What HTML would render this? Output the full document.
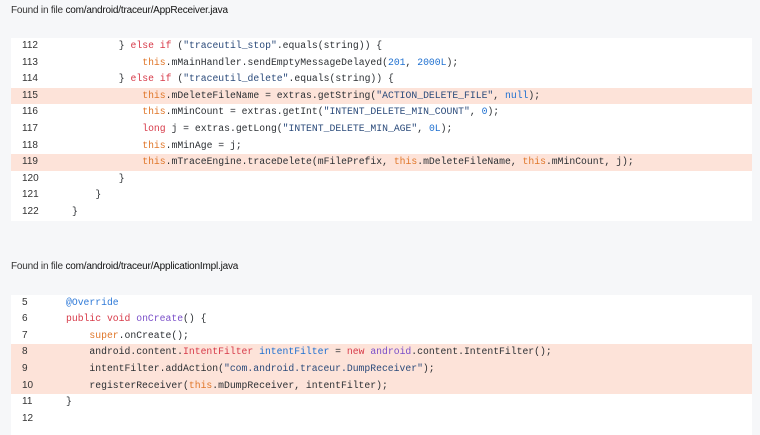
<!DOCTYPE html>
<html><head><meta charset="utf-8"><style>
body{margin:0;width:760px;height:433px;overflow:hidden;background:#f6f7f9;font-family:"Liberation Sans",sans-serif;}
.h{position:absolute;left:11px;font-size:10px;color:#333;letter-spacing:-0.2px}
.h b{font-weight:normal;color:#111;}
.blk{position:absolute;left:11px;width:741px;background:#fff;}
.r{height:16.6px;line-height:16.6px;position:relative;white-space:pre;}
.r.hl{background:#fde3d9;}
.n{position:absolute;left:11px;font-size:10px;color:#333;}
.c{position:absolute;font-family:"Liberation Mono",monospace;font-size:9.75px;color:#2b2f33;}
.k{color:#d73a49}.s{color:#2a4a7a}.num{color:#1d6fd0}.t{color:#e0772a}.f{color:#7a4fc9}.a{color:#2f7ad8}
</style></head><body>
<div class="h" style="top:5px">Found in file <b>com/android/traceur/AppReceiver.java</b></div>
<div class="blk" style="top:38px">
<div class="r"><span class="n">112</span><span class="c" style="left:61px">        } <span class="k">else if</span> (<span class="s">"traceutil_stop"</span>.equals(string)) {</span></div>
<div class="r"><span class="n">113</span><span class="c" style="left:61px">            <span class="t">this</span>.mMainHandler.sendEmptyMessageDelayed(<span class="num">201</span>, <span class="num">2000L</span>);</span></div>
<div class="r"><span class="n">114</span><span class="c" style="left:61px">        } <span class="k">else if</span> (<span class="s">"traceutil_delete"</span>.equals(string)) {</span></div>
<div class="r hl"><span class="n">115</span><span class="c" style="left:61px">            <span class="t">this</span>.mDeleteFileName = extras.getString(<span class="s">"ACTION_DELETE_FILE"</span>, <span class="num">null</span>);</span></div>
<div class="r"><span class="n">116</span><span class="c" style="left:61px">            <span class="t">this</span>.mMinCount = extras.getInt(<span class="s">"INTENT_DELETE_MIN_COUNT"</span>, <span class="num">0</span>);</span></div>
<div class="r"><span class="n">117</span><span class="c" style="left:61px">            <span class="k">long</span> j = extras.getLong(<span class="s">"INTENT_DELETE_MIN_AGE"</span>, <span class="num">0L</span>);</span></div>
<div class="r"><span class="n">118</span><span class="c" style="left:61px">            <span class="t">this</span>.mMinAge = j;</span></div>
<div class="r hl"><span class="n">119</span><span class="c" style="left:61px">            <span class="t">this</span>.mTraceEngine.traceDelete(mFilePrefix, <span class="t">this</span>.mDeleteFileName, <span class="t">this</span>.mMinCount, j);</span></div>
<div class="r"><span class="n">120</span><span class="c" style="left:61px">        }</span></div>
<div class="r"><span class="n">121</span><span class="c" style="left:61px">    }</span></div>
<div class="r"><span class="n">122</span><span class="c" style="left:61px">}</span></div>
</div>
<div class="h" style="top:261px">Found in file <b>com/android/traceur/ApplicationImpl.java</b></div>
<div class="blk" style="top:294.7px;height:140px">
<div class="r"><span class="n">5</span><span class="c" style="left:55px"><span class="a">@Override</span></span></div>
<div class="r"><span class="n">6</span><span class="c" style="left:55px"><span class="k">public void</span> <span class="f">onCreate</span>() {</span></div>
<div class="r"><span class="n">7</span><span class="c" style="left:55px">    <span class="t">super</span>.onCreate();</span></div>
<div class="r hl"><span class="n">8</span><span class="c" style="left:55px">    android.content.<span class="k">IntentFilter</span> <span class="num">intentFilter</span> = <span class="k">new</span> <span class="f">android</span>.content.IntentFilter();</span></div>
<div class="r hl"><span class="n">9</span><span class="c" style="left:55px">    intentFilter.addAction(<span class="s">"com.android.traceur.DumpReceiver"</span>);</span></div>
<div class="r hl"><span class="n">10</span><span class="c" style="left:55px">    registerReceiver(<span class="t">this</span>.mDumpReceiver, intentFilter);</span></div>
<div class="r"><span class="n">11</span><span class="c" style="left:55px">}</span></div>
<div class="r"><span class="n">12</span><span class="c" style="left:55px"></span></div>
</div>
</body></html>
